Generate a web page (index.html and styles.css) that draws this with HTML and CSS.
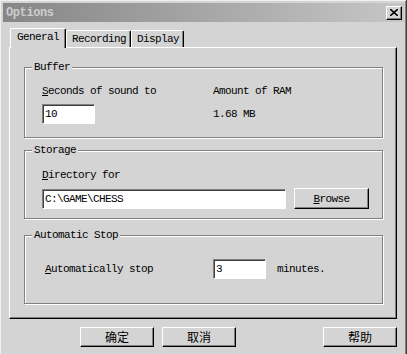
FILE: index.html
```html
<!DOCTYPE html>
<html lang="en">
<head>
  <meta charset="UTF-8">
  <title>Options</title>
  <link rel="stylesheet" href="styles.css">
</head>
<body>
  <div class="window">
    <div class="titlebar">
      <span class="title">Options</span>
      <span class="close-btn">
        <svg width="8" height="7" viewBox="0 0 8 7">
          <path d="M0 0 L8 7 M8 0 L0 7" stroke="#000" stroke-width="1.6" fill="none"/>
        </svg>
      </span>
    </div>

    <div class="tabs">
      <div class="tab active">General</div>
      <div class="tab tab-recording">Recording</div>
      <div class="tab tab-display">Display</div>
    </div>

    <div class="panel">
      <div class="group group-buffer">
        <span class="group-title">Buffer</span>
        <div class="grid">
          <span class="label"><u>S</u>econds of sound to</span>
          <span class="label">Amount of RAM</span>
          <div class="field field-small">10</div>
          <span class="value">1.68 MB</span>
        </div>
      </div>

      <div class="group group-storage">
        <span class="group-title">Storage</span>
        <span class="label label-dir"><u>D</u>irectory for</span>
        <div class="row">
          <div class="field field-wide">C:\GAME\CHESS</div>
          <button class="btn btn-browse"><u>B</u>rowse</button>
        </div>
      </div>

      <div class="group group-stop">
        <span class="group-title">Automatic Stop</span>
        <div class="grid grid-stop">
          <span class="label label-auto"><u>A</u>utomatically stop</span>
          <div class="stop-right">
            <div class="field field-small">3</div>
            <span class="label">minutes.</span>
          </div>
        </div>
      </div>
    </div>

    <div class="buttons">
      <button class="btn btn-cn">确定</button>
      <button class="btn btn-cn">取消</button>
      <button class="btn btn-cn btn-help">帮助</button>
    </div>
  </div>
</body>
</html>
```

FILE: styles.css
```css
body {
  margin: 0;
  font-family: "Liberation Mono", monospace;
  font-size: 11px;
  letter-spacing: -0.6px;
  color: #000;
}

.window {
  width: 407px;
  height: 354px;
  box-sizing: border-box;
  padding: 3px 2px 0 3px;
  background: #d4d4d4;
  border-right: 1px solid #404040;
  box-shadow: inset 1px 1px 0 #f0f0f0, inset -1px 0 0 #808080;
  overflow: hidden;
}

.titlebar {
  height: 19px;
  display: flex;
  align-items: center;
  justify-content: space-between;
  padding: 0 2px 0 3px;
  background: linear-gradient(to right, #868686, #c6c6c6);
}

.title {
  font-weight: bold;
  font-size: 12px;
  letter-spacing: -0.4px;
  color: #cdcdcd;
}

.close-btn {
  width: 16px;
  height: 14px;
  box-sizing: border-box;
  display: flex;
  align-items: center;
  justify-content: center;
  background: #d4d4d4;
  border: 1px solid;
  border-color: #fff #000 #000 #fff;
  box-shadow: inset -1px -1px 0 #808080;
}

.tabs {
  display: flex;
  align-items: flex-end;
  height: 19px;
  margin: 6px 0 0 7px;
}

.tab {
  height: 17px;
  box-sizing: border-box;
  padding: 0 5px;
  line-height: 16px;
  text-align: center;
  background: #d4d4d4;
  border: 1px solid;
  border-color: #fff #000 transparent #fff;
  border-bottom: none;
  border-radius: 2px 2px 0 0;
  box-shadow: inset -1px 0 0 #808080;
}

.tab.active {
  width: 56px;
  height: 20px;
  margin-bottom: -1px;
  line-height: 16px;
  position: relative;
  z-index: 1;
}

.tab-recording {
  width: 65px;
}

.tab-display {
  width: 53px;
}

.panel {
  width: 388px;
  height: 272px;
  box-sizing: border-box;
  margin-left: 6px;
  padding: 19px 13px 0 14px;
  border: 1px solid;
  border-color: #fff #000 #000 #fff;
  box-shadow: inset -1px -1px 0 #808080;
}

.group {
  box-sizing: border-box;
  border: 1px solid #808080;
  box-shadow: 1px 1px 0 #fff, inset 1px 1px 0 #fff;
  padding: 0 0 0 17px;
}

.group-title {
  display: block;
  width: fit-content;
  margin: -7px 0 0 -10px;
  padding: 0 2px;
  line-height: 13px;
  background: #d4d4d4;
}

.group-buffer {
  height: 71px;
}

.group-storage {
  height: 69px;
  margin-top: 12px;
}

.group-stop {
  height: 69px;
  margin-top: 16px;
}

.grid {
  display: grid;
  grid-template-columns: 171px auto;
  align-items: center;
  row-gap: 7px;
  margin-top: 11px;
}

.grid-stop {
  margin-top: 17px;
}

.label,
.value {
  line-height: 12px;
}

.label-dir {
  display: block;
  margin-top: 12px;
}

.label-auto {
  padding-left: 3px;
}

.field {
  height: 20px;
  box-sizing: border-box;
  padding: 0 2px;
  line-height: 18px;
  background: #fff;
  border: 1px solid;
  border-color: #808080 #fff #fff #808080;
  box-shadow: inset 1px 1px 0 #404040;
}

.field-small {
  width: 53px;
}

.field-wide {
  width: 244px;
}

.row {
  display: flex;
  align-items: center;
  gap: 8px;
  margin-top: 7px;
}

.stop-right {
  display: flex;
  align-items: center;
  gap: 11px;
}

.btn {
  height: 21px;
  box-sizing: border-box;
  padding: 0;
  font-family: "Liberation Mono", monospace;
  font-size: 11px;
  letter-spacing: -0.6px;
  color: #000;
  background: #d4d4d4;
  border: 1px solid;
  border-color: #fff #000 #000 #fff;
  box-shadow: inset -1px -1px 0 #808080;
}

.btn-browse {
  width: 75px;
}

.buttons {
  display: flex;
  gap: 8px;
  margin: 8px 0 0 77px;
  width: 317px;
}

.btn-cn {
  width: 74px;
  height: 20px;
  font-family: "Noto Sans CJK SC", sans-serif;
  font-size: 12px;
  letter-spacing: 0;
  line-height: 16px;
}

.btn-help {
  margin-left: auto;
}
```
